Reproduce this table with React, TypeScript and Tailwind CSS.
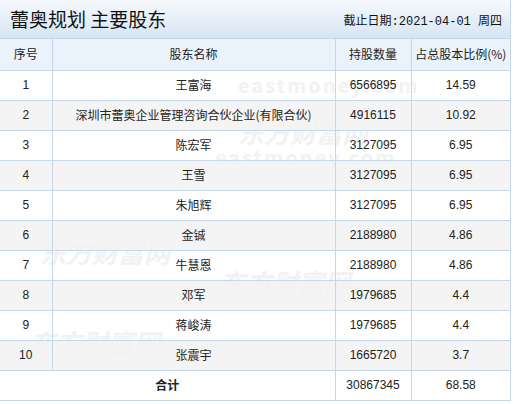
import React from 'react'

const rows = [
    { no: 1, name: '王富海', shares: '6566895', pct: '14.59' },
    { no: 2, name: '深圳市蕾奥企业管理咨询合伙企业(有限合伙)', shares: '4916115', pct: '10.92' },
    { no: 3, name: '陈宏军', shares: '3127095', pct: '6.95' },
    { no: 4, name: '王雪', shares: '3127095', pct: '6.95' },
    { no: 5, name: '朱旭辉', shares: '3127095', pct: '6.95' },
    { no: 6, name: '金铖', shares: '2188980', pct: '4.86' },
    { no: 7, name: '牛慧恩', shares: '2188980', pct: '4.86' },
    { no: 8, name: '邓军', shares: '1979685', pct: '4.4' },
    { no: 9, name: '蒋峻涛', shares: '1979685', pct: '4.4' },
    { no: 10, name: '张震宇', shares: '1665720', pct: '3.7' },
]

// faint site watermarks behind the table
const marks = [
    { x: 238, y: 70, text: 'eastmoney.com', big: false },
    { x: 238, y: 112, text: '东方财富网', big: true },
    { x: 215, y: 142, text: 'eastmoney.com', big: false },
    { x: 40, y: 232, text: '东方财富网', big: true },
    { x: 220, y: 262, text: '东方财富网', big: true },
    { x: 30, y: 322, text: '东方财富网', big: true },
]

export default function App() {
    return (
        <div className="relative w-[514px] h-[404px] bg-white overflow-hidden text-[12px] text-[#222]" style={{ fontFamily: '"Liberation Sans", Arial, "Noto Sans CJK SC", sans-serif' }}>
            {marks.map((m, i) => (
                <span
                    key={i}
                    className={`absolute z-0 pointer-events-none font-bold whitespace-nowrap text-[#f2f2f2] ${m.big ? 'text-[26px] italic' : 'text-[20px] tracking-[2px]'}`}
                    style={{ left: m.x, top: m.y, fontFamily: '"Noto Sans CJK SC", "Liberation Sans", sans-serif' }}
                >
                    {m.text}
                </span>
            ))}
            <div className="relative z-10 w-[511px] border-r border-[#c5d8ea]">
                <div className="h-[39px] flex items-center justify-between pl-[10px] pr-[8px] bg-gradient-to-b from-[#f5f9fd] to-[#d7e6f3] border-b border-[#c5d8ea]">
                    <span className="text-[19px] text-[#111]" style={{ fontFamily: '"Noto Sans CJK SC", sans-serif' }}>蕾奥规划 主要股东</span>
                    <span className="text-[12px] text-[#111] pt-[6px]" style={{ fontFamily: '"Liberation Mono", "Noto Sans CJK SC", monospace' }}>截止日期:2021-04-01 周四</span>
                </div>
                <table className="w-full border-collapse table-fixed">
                    <colgroup>
                        <col className="w-[52px]" />
                        <col className="w-[283px]" />
                        <col className="w-[76px]" />
                        <col />
                    </colgroup>
                    <thead>
                        <tr className="h-[31px] bg-[#eaf3fb] text-[#222]" style={{ fontFamily: '"Noto Sans CJK SC", sans-serif' }}>
                            <th className="font-normal border-b border-r border-[#c5d8ea]">序号</th>
                            <th className="font-normal border-b border-r border-[#c5d8ea]">股东名称</th>
                            <th className="font-normal border-b border-r border-[#c5d8ea]">持股数量</th>
                            <th className="font-normal border-b border-[#c5d8ea] whitespace-nowrap">占总股本比例(%)</th>
                        </tr>
                    </thead>
                    <tbody>
                        {rows.map(r => (
                            <tr key={r.no} className={`h-[30px] ${r.no % 2 === 0 ? 'bg-[#f2f2f2]/85' : ''}`}>
                                <td className="text-center border-b border-r border-[#c5d8ea]">{r.no}</td>
                                <td className="text-center border-b border-r border-[#c5d8ea] whitespace-nowrap" style={{ fontFamily: '"Noto Sans CJK SC", sans-serif' }}>{r.name}</td>
                                <td className="text-center border-b border-r border-[#c5d8ea]">{r.shares}</td>
                                <td className="text-center border-b border-[#c5d8ea]">{r.pct}</td>
                            </tr>
                        ))}
                        <tr className="h-[30px]">
                            <td colSpan={2} className="text-center font-bold border-b border-r border-[#c5d8ea]" style={{ fontFamily: '"Noto Sans CJK SC", sans-serif' }}>合计</td>
                            <td className="text-center border-b border-r border-[#c5d8ea]">30867345</td>
                            <td className="text-center border-b border-[#c5d8ea]">68.58</td>
                        </tr>
                    </tbody>
                </table>
            </div>
        </div>
    )
}
